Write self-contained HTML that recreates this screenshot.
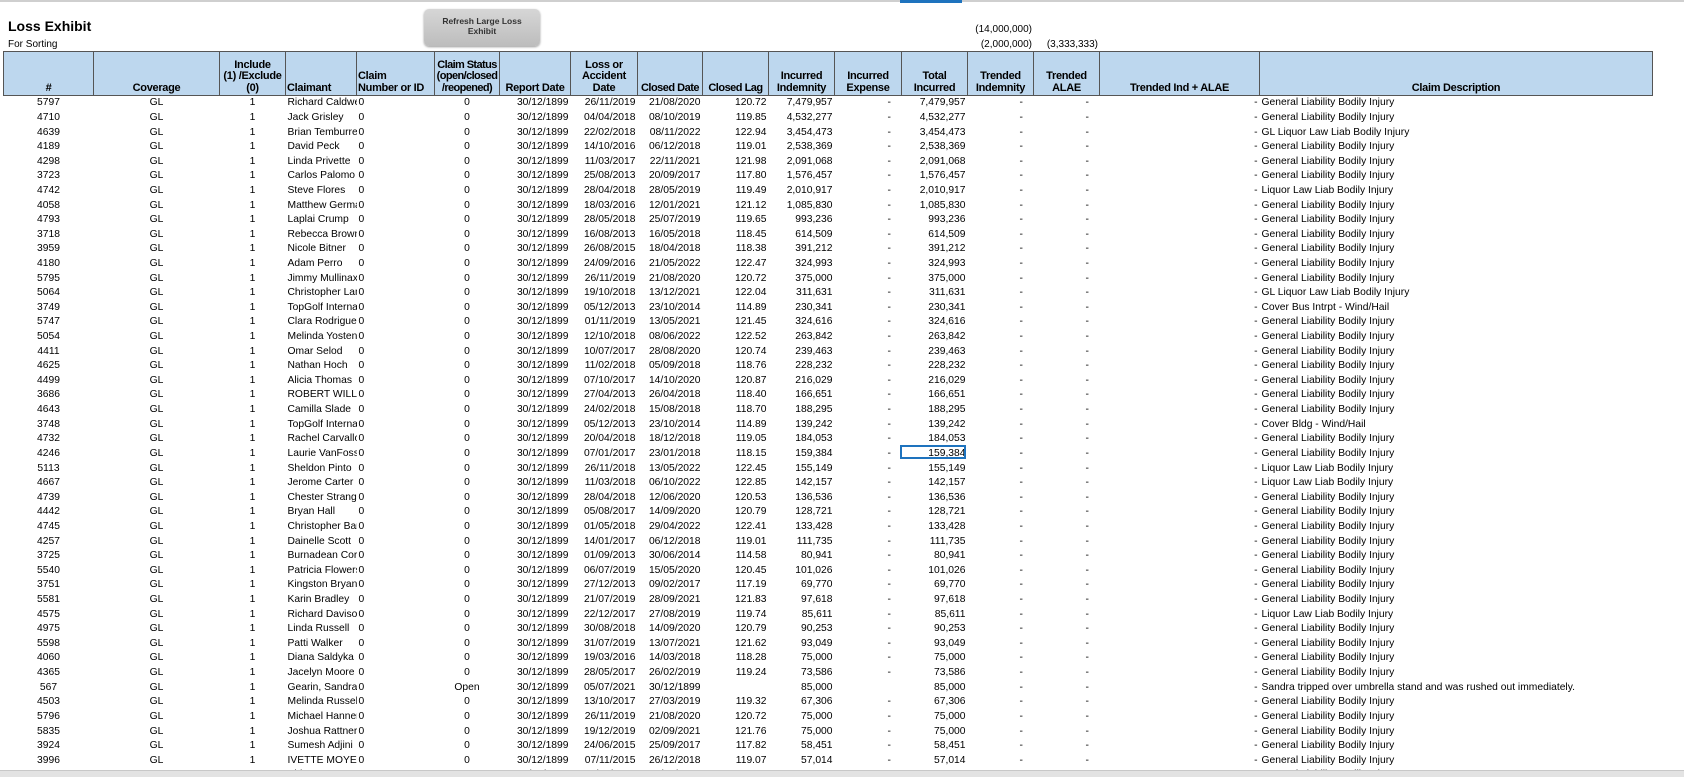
<!DOCTYPE html>
<html><head><meta charset="utf-8">
<style>
html,body{margin:0;padding:0;background:#fff;width:1684px;height:777px;overflow:hidden;position:relative;font-family:"Liberation Sans",Arial,sans-serif;}
.top{position:absolute;left:0;top:0;width:1684px;height:2px;background:#cfcfcf;}
.topsel{position:absolute;left:900px;top:0;width:62px;height:3px;background:#1e73be;}
.title{position:absolute;left:8px;top:18px;font-weight:bold;font-size:14px;color:#000;}
.sub{position:absolute;left:8px;top:39px;font-size:10px;color:#000;}
.btn{position:absolute;left:424px;top:9px;width:116px;height:37px;background:linear-gradient(#d6d6d6,#bdbdbd);border-radius:5px;font-size:8.5px;font-weight:bold;text-align:center;line-height:10px;box-sizing:border-box;padding-top:7px;color:#333;box-shadow:0 1px 2px #999;}
.num{position:absolute;font-size:10px;text-align:right;width:70px;}
table{position:absolute;left:3px;top:51px;border-collapse:collapse;table-layout:fixed;width:1649px;font-size:10.3px;}
th{background:#bdd7ee;border:1px solid #555;font-size:11px;letter-spacing:-0.3px;font-weight:bold;vertical-align:bottom;line-height:11.5px;padding:0;height:43px;text-align:center;overflow:hidden;}
th div{max-height:43px;overflow:hidden;display:flex;flex-direction:column;justify-content:flex-end;padding:0 1px 1px 1px;}
th.l{text-align:left;}
td{height:14.62px;padding:0 2px;white-space:nowrap;overflow:hidden;line-height:14px;}
.c{text-align:center}.r{text-align:right}.l{text-align:left}
.sb{position:absolute;left:0;top:770px;width:1684px;height:7px;background:#e3e3e3;border-top:1px solid #c8c8c8;}
.selbox{position:absolute;left:900px;top:445px;width:66px;height:14px;border:2px solid #1e73be;box-sizing:border-box;}
</style></head><body>
<div class="top"></div><div class="topsel"></div>
<div class="title">Loss Exhibit</div>
<div class="sub">For Sorting</div>
<div class="btn">Refresh Large Loss<br>Exhibit</div>
<div class="num" style="left:962px;top:24px">(14,000,000)</div>
<div class="num" style="left:962px;top:39px">(2,000,000)</div>
<div class="num" style="left:1028px;top:39px">(3,333,333)</div>
<table>
<colgroup><col style="width:90px"><col style="width:126px"><col style="width:66px"><col style="width:71px"><col style="width:78px"><col style="width:65px"><col style="width:71px"><col style="width:67px"><col style="width:65px"><col style="width:66px"><col style="width:66px"><col style="width:67px"><col style="width:66px"><col style="width:66px"><col style="width:66px"><col style="width:160px"><col style="width:393px"></colgroup>
<tr><th><div>#</div></th><th><div>Coverage</div></th><th><div>Include<br>(1) /Exclude<br>(0)</div></th><th class="l"><div>Claimant</div></th><th class="l"><div>Claim<br>Number or ID</div></th><th style="letter-spacing:-0.6px"><div>Claim Status<br>(open/closed<br>/reopened)</div></th><th><div>Report Date</div></th><th><div>Loss or<br>Accident<br>Date</div></th><th style="white-space:nowrap;letter-spacing:-0.5px"><div>Closed Date</div></th><th style="white-space:nowrap;letter-spacing:-0.5px"><div>Closed Lag</div></th><th><div>Incurred<br>Indemnity</div></th><th><div>Incurred<br>Expense</div></th><th><div>Total<br>Incurred</div></th><th><div>Trended<br>Indemnity</div></th><th><div>Trended<br>ALAE</div></th><th><div>Trended Ind + ALAE</div></th><th><div>Claim Description</div></th></tr>
<tr><td class="c">5797</td><td class="c">GL</td><td class="c">1</td><td>Richard Caldwell</td><td>0</td><td class="c">0</td><td class="r">30/12/1899</td><td class="r">26/11/2019</td><td class="r">21/08/2020</td><td class="r">120.72</td><td class="r">7,479,957</td><td class="r">-&nbsp;&nbsp;&nbsp;</td><td class="r">7,479,957</td><td class="r">-&nbsp;&nbsp;&nbsp;</td><td class="r">-&nbsp;&nbsp;&nbsp;</td><td class="r">-</td><td>General Liability Bodily Injury</td></tr>
<tr><td class="c">4710</td><td class="c">GL</td><td class="c">1</td><td>Jack Grisley</td><td>0</td><td class="c">0</td><td class="r">30/12/1899</td><td class="r">04/04/2018</td><td class="r">08/10/2019</td><td class="r">119.85</td><td class="r">4,532,277</td><td class="r">-&nbsp;&nbsp;&nbsp;</td><td class="r">4,532,277</td><td class="r">-&nbsp;&nbsp;&nbsp;</td><td class="r">-&nbsp;&nbsp;&nbsp;</td><td class="r">-</td><td>General Liability Bodily Injury</td></tr>
<tr><td class="c">4639</td><td class="c">GL</td><td class="c">1</td><td>Brian Temburren</td><td>0</td><td class="c">0</td><td class="r">30/12/1899</td><td class="r">22/02/2018</td><td class="r">08/11/2022</td><td class="r">122.94</td><td class="r">3,454,473</td><td class="r">-&nbsp;&nbsp;&nbsp;</td><td class="r">3,454,473</td><td class="r">-&nbsp;&nbsp;&nbsp;</td><td class="r">-&nbsp;&nbsp;&nbsp;</td><td class="r">-</td><td>GL Liquor Law Liab Bodily Injury</td></tr>
<tr><td class="c">4189</td><td class="c">GL</td><td class="c">1</td><td>David Peck</td><td>0</td><td class="c">0</td><td class="r">30/12/1899</td><td class="r">14/10/2016</td><td class="r">06/12/2018</td><td class="r">119.01</td><td class="r">2,538,369</td><td class="r">-&nbsp;&nbsp;&nbsp;</td><td class="r">2,538,369</td><td class="r">-&nbsp;&nbsp;&nbsp;</td><td class="r">-&nbsp;&nbsp;&nbsp;</td><td class="r">-</td><td>General Liability Bodily Injury</td></tr>
<tr><td class="c">4298</td><td class="c">GL</td><td class="c">1</td><td>Linda Privette</td><td>0</td><td class="c">0</td><td class="r">30/12/1899</td><td class="r">11/03/2017</td><td class="r">22/11/2021</td><td class="r">121.98</td><td class="r">2,091,068</td><td class="r">-&nbsp;&nbsp;&nbsp;</td><td class="r">2,091,068</td><td class="r">-&nbsp;&nbsp;&nbsp;</td><td class="r">-&nbsp;&nbsp;&nbsp;</td><td class="r">-</td><td>General Liability Bodily Injury</td></tr>
<tr><td class="c">3723</td><td class="c">GL</td><td class="c">1</td><td>Carlos Palomo</td><td>0</td><td class="c">0</td><td class="r">30/12/1899</td><td class="r">25/08/2013</td><td class="r">20/09/2017</td><td class="r">117.80</td><td class="r">1,576,457</td><td class="r">-&nbsp;&nbsp;&nbsp;</td><td class="r">1,576,457</td><td class="r">-&nbsp;&nbsp;&nbsp;</td><td class="r">-&nbsp;&nbsp;&nbsp;</td><td class="r">-</td><td>General Liability Bodily Injury</td></tr>
<tr><td class="c">4742</td><td class="c">GL</td><td class="c">1</td><td>Steve Flores</td><td>0</td><td class="c">0</td><td class="r">30/12/1899</td><td class="r">28/04/2018</td><td class="r">28/05/2019</td><td class="r">119.49</td><td class="r">2,010,917</td><td class="r">-&nbsp;&nbsp;&nbsp;</td><td class="r">2,010,917</td><td class="r">-&nbsp;&nbsp;&nbsp;</td><td class="r">-&nbsp;&nbsp;&nbsp;</td><td class="r">-</td><td>Liquor Law Liab Bodily Injury</td></tr>
<tr><td class="c">4058</td><td class="c">GL</td><td class="c">1</td><td>Matthew Germain</td><td>0</td><td class="c">0</td><td class="r">30/12/1899</td><td class="r">18/03/2016</td><td class="r">12/01/2021</td><td class="r">121.12</td><td class="r">1,085,830</td><td class="r">-&nbsp;&nbsp;&nbsp;</td><td class="r">1,085,830</td><td class="r">-&nbsp;&nbsp;&nbsp;</td><td class="r">-&nbsp;&nbsp;&nbsp;</td><td class="r">-</td><td>General Liability Bodily Injury</td></tr>
<tr><td class="c">4793</td><td class="c">GL</td><td class="c">1</td><td>Laplai Crump</td><td>0</td><td class="c">0</td><td class="r">30/12/1899</td><td class="r">28/05/2018</td><td class="r">25/07/2019</td><td class="r">119.65</td><td class="r">993,236</td><td class="r">-&nbsp;&nbsp;&nbsp;</td><td class="r">993,236</td><td class="r">-&nbsp;&nbsp;&nbsp;</td><td class="r">-&nbsp;&nbsp;&nbsp;</td><td class="r">-</td><td>General Liability Bodily Injury</td></tr>
<tr><td class="c">3718</td><td class="c">GL</td><td class="c">1</td><td>Rebecca Brown</td><td>0</td><td class="c">0</td><td class="r">30/12/1899</td><td class="r">16/08/2013</td><td class="r">16/05/2018</td><td class="r">118.45</td><td class="r">614,509</td><td class="r">-&nbsp;&nbsp;&nbsp;</td><td class="r">614,509</td><td class="r">-&nbsp;&nbsp;&nbsp;</td><td class="r">-&nbsp;&nbsp;&nbsp;</td><td class="r">-</td><td>General Liability Bodily Injury</td></tr>
<tr><td class="c">3959</td><td class="c">GL</td><td class="c">1</td><td>Nicole Bitner</td><td>0</td><td class="c">0</td><td class="r">30/12/1899</td><td class="r">26/08/2015</td><td class="r">18/04/2018</td><td class="r">118.38</td><td class="r">391,212</td><td class="r">-&nbsp;&nbsp;&nbsp;</td><td class="r">391,212</td><td class="r">-&nbsp;&nbsp;&nbsp;</td><td class="r">-&nbsp;&nbsp;&nbsp;</td><td class="r">-</td><td>General Liability Bodily Injury</td></tr>
<tr><td class="c">4180</td><td class="c">GL</td><td class="c">1</td><td>Adam Perro</td><td>0</td><td class="c">0</td><td class="r">30/12/1899</td><td class="r">24/09/2016</td><td class="r">21/05/2022</td><td class="r">122.47</td><td class="r">324,993</td><td class="r">-&nbsp;&nbsp;&nbsp;</td><td class="r">324,993</td><td class="r">-&nbsp;&nbsp;&nbsp;</td><td class="r">-&nbsp;&nbsp;&nbsp;</td><td class="r">-</td><td>General Liability Bodily Injury</td></tr>
<tr><td class="c">5795</td><td class="c">GL</td><td class="c">1</td><td>Jimmy Mullinax</td><td>0</td><td class="c">0</td><td class="r">30/12/1899</td><td class="r">26/11/2019</td><td class="r">21/08/2020</td><td class="r">120.72</td><td class="r">375,000</td><td class="r">-&nbsp;&nbsp;&nbsp;</td><td class="r">375,000</td><td class="r">-&nbsp;&nbsp;&nbsp;</td><td class="r">-&nbsp;&nbsp;&nbsp;</td><td class="r">-</td><td>General Liability Bodily Injury</td></tr>
<tr><td class="c">5064</td><td class="c">GL</td><td class="c">1</td><td>Christopher Lane</td><td>0</td><td class="c">0</td><td class="r">30/12/1899</td><td class="r">19/10/2018</td><td class="r">13/12/2021</td><td class="r">122.04</td><td class="r">311,631</td><td class="r">-&nbsp;&nbsp;&nbsp;</td><td class="r">311,631</td><td class="r">-&nbsp;&nbsp;&nbsp;</td><td class="r">-&nbsp;&nbsp;&nbsp;</td><td class="r">-</td><td>GL Liquor Law Liab Bodily Injury</td></tr>
<tr><td class="c">3749</td><td class="c">GL</td><td class="c">1</td><td>TopGolf International</td><td>0</td><td class="c">0</td><td class="r">30/12/1899</td><td class="r">05/12/2013</td><td class="r">23/10/2014</td><td class="r">114.89</td><td class="r">230,341</td><td class="r">-&nbsp;&nbsp;&nbsp;</td><td class="r">230,341</td><td class="r">-&nbsp;&nbsp;&nbsp;</td><td class="r">-&nbsp;&nbsp;&nbsp;</td><td class="r">-</td><td>Cover Bus Intrpt - Wind/Hail</td></tr>
<tr><td class="c">5747</td><td class="c">GL</td><td class="c">1</td><td>Clara Rodriguez</td><td>0</td><td class="c">0</td><td class="r">30/12/1899</td><td class="r">01/11/2019</td><td class="r">13/05/2021</td><td class="r">121.45</td><td class="r">324,616</td><td class="r">-&nbsp;&nbsp;&nbsp;</td><td class="r">324,616</td><td class="r">-&nbsp;&nbsp;&nbsp;</td><td class="r">-&nbsp;&nbsp;&nbsp;</td><td class="r">-</td><td>General Liability Bodily Injury</td></tr>
<tr><td class="c">5054</td><td class="c">GL</td><td class="c">1</td><td>Melinda Yosten</td><td>0</td><td class="c">0</td><td class="r">30/12/1899</td><td class="r">12/10/2018</td><td class="r">08/06/2022</td><td class="r">122.52</td><td class="r">263,842</td><td class="r">-&nbsp;&nbsp;&nbsp;</td><td class="r">263,842</td><td class="r">-&nbsp;&nbsp;&nbsp;</td><td class="r">-&nbsp;&nbsp;&nbsp;</td><td class="r">-</td><td>General Liability Bodily Injury</td></tr>
<tr><td class="c">4411</td><td class="c">GL</td><td class="c">1</td><td>Omar Selod</td><td>0</td><td class="c">0</td><td class="r">30/12/1899</td><td class="r">10/07/2017</td><td class="r">28/08/2020</td><td class="r">120.74</td><td class="r">239,463</td><td class="r">-&nbsp;&nbsp;&nbsp;</td><td class="r">239,463</td><td class="r">-&nbsp;&nbsp;&nbsp;</td><td class="r">-&nbsp;&nbsp;&nbsp;</td><td class="r">-</td><td>General Liability Bodily Injury</td></tr>
<tr><td class="c">4625</td><td class="c">GL</td><td class="c">1</td><td>Nathan Hoch</td><td>0</td><td class="c">0</td><td class="r">30/12/1899</td><td class="r">11/02/2018</td><td class="r">05/09/2018</td><td class="r">118.76</td><td class="r">228,232</td><td class="r">-&nbsp;&nbsp;&nbsp;</td><td class="r">228,232</td><td class="r">-&nbsp;&nbsp;&nbsp;</td><td class="r">-&nbsp;&nbsp;&nbsp;</td><td class="r">-</td><td>General Liability Bodily Injury</td></tr>
<tr><td class="c">4499</td><td class="c">GL</td><td class="c">1</td><td>Alicia Thomas</td><td>0</td><td class="c">0</td><td class="r">30/12/1899</td><td class="r">07/10/2017</td><td class="r">14/10/2020</td><td class="r">120.87</td><td class="r">216,029</td><td class="r">-&nbsp;&nbsp;&nbsp;</td><td class="r">216,029</td><td class="r">-&nbsp;&nbsp;&nbsp;</td><td class="r">-&nbsp;&nbsp;&nbsp;</td><td class="r">-</td><td>General Liability Bodily Injury</td></tr>
<tr><td class="c">3686</td><td class="c">GL</td><td class="c">1</td><td>ROBERT WILLETT</td><td>0</td><td class="c">0</td><td class="r">30/12/1899</td><td class="r">27/04/2013</td><td class="r">26/04/2018</td><td class="r">118.40</td><td class="r">166,651</td><td class="r">-&nbsp;&nbsp;&nbsp;</td><td class="r">166,651</td><td class="r">-&nbsp;&nbsp;&nbsp;</td><td class="r">-&nbsp;&nbsp;&nbsp;</td><td class="r">-</td><td>General Liability Bodily Injury</td></tr>
<tr><td class="c">4643</td><td class="c">GL</td><td class="c">1</td><td>Camilla Slade</td><td>0</td><td class="c">0</td><td class="r">30/12/1899</td><td class="r">24/02/2018</td><td class="r">15/08/2018</td><td class="r">118.70</td><td class="r">188,295</td><td class="r">-&nbsp;&nbsp;&nbsp;</td><td class="r">188,295</td><td class="r">-&nbsp;&nbsp;&nbsp;</td><td class="r">-&nbsp;&nbsp;&nbsp;</td><td class="r">-</td><td>General Liability Bodily Injury</td></tr>
<tr><td class="c">3748</td><td class="c">GL</td><td class="c">1</td><td>TopGolf International</td><td>0</td><td class="c">0</td><td class="r">30/12/1899</td><td class="r">05/12/2013</td><td class="r">23/10/2014</td><td class="r">114.89</td><td class="r">139,242</td><td class="r">-&nbsp;&nbsp;&nbsp;</td><td class="r">139,242</td><td class="r">-&nbsp;&nbsp;&nbsp;</td><td class="r">-&nbsp;&nbsp;&nbsp;</td><td class="r">-</td><td>Cover Bldg - Wind/Hail</td></tr>
<tr><td class="c">4732</td><td class="c">GL</td><td class="c">1</td><td>Rachel Carvallo</td><td>0</td><td class="c">0</td><td class="r">30/12/1899</td><td class="r">20/04/2018</td><td class="r">18/12/2018</td><td class="r">119.05</td><td class="r">184,053</td><td class="r">-&nbsp;&nbsp;&nbsp;</td><td class="r">184,053</td><td class="r">-&nbsp;&nbsp;&nbsp;</td><td class="r">-&nbsp;&nbsp;&nbsp;</td><td class="r">-</td><td>General Liability Bodily Injury</td></tr>
<tr><td class="c">4246</td><td class="c">GL</td><td class="c">1</td><td>Laurie VanFossen</td><td>0</td><td class="c">0</td><td class="r">30/12/1899</td><td class="r">07/01/2017</td><td class="r">23/01/2018</td><td class="r">118.15</td><td class="r">159,384</td><td class="r">-&nbsp;&nbsp;&nbsp;</td><td class="r">159,384</td><td class="r">-&nbsp;&nbsp;&nbsp;</td><td class="r">-&nbsp;&nbsp;&nbsp;</td><td class="r">-</td><td>General Liability Bodily Injury</td></tr>
<tr><td class="c">5113</td><td class="c">GL</td><td class="c">1</td><td>Sheldon Pinto</td><td>0</td><td class="c">0</td><td class="r">30/12/1899</td><td class="r">26/11/2018</td><td class="r">13/05/2022</td><td class="r">122.45</td><td class="r">155,149</td><td class="r">-&nbsp;&nbsp;&nbsp;</td><td class="r">155,149</td><td class="r">-&nbsp;&nbsp;&nbsp;</td><td class="r">-&nbsp;&nbsp;&nbsp;</td><td class="r">-</td><td>Liquor Law Liab Bodily Injury</td></tr>
<tr><td class="c">4667</td><td class="c">GL</td><td class="c">1</td><td>Jerome Carter</td><td>0</td><td class="c">0</td><td class="r">30/12/1899</td><td class="r">11/03/2018</td><td class="r">06/10/2022</td><td class="r">122.85</td><td class="r">142,157</td><td class="r">-&nbsp;&nbsp;&nbsp;</td><td class="r">142,157</td><td class="r">-&nbsp;&nbsp;&nbsp;</td><td class="r">-&nbsp;&nbsp;&nbsp;</td><td class="r">-</td><td>Liquor Law Liab Bodily Injury</td></tr>
<tr><td class="c">4739</td><td class="c">GL</td><td class="c">1</td><td>Chester Strange</td><td>0</td><td class="c">0</td><td class="r">30/12/1899</td><td class="r">28/04/2018</td><td class="r">12/06/2020</td><td class="r">120.53</td><td class="r">136,536</td><td class="r">-&nbsp;&nbsp;&nbsp;</td><td class="r">136,536</td><td class="r">-&nbsp;&nbsp;&nbsp;</td><td class="r">-&nbsp;&nbsp;&nbsp;</td><td class="r">-</td><td>General Liability Bodily Injury</td></tr>
<tr><td class="c">4442</td><td class="c">GL</td><td class="c">1</td><td>Bryan Hall</td><td>0</td><td class="c">0</td><td class="r">30/12/1899</td><td class="r">05/08/2017</td><td class="r">14/09/2020</td><td class="r">120.79</td><td class="r">128,721</td><td class="r">-&nbsp;&nbsp;&nbsp;</td><td class="r">128,721</td><td class="r">-&nbsp;&nbsp;&nbsp;</td><td class="r">-&nbsp;&nbsp;&nbsp;</td><td class="r">-</td><td>General Liability Bodily Injury</td></tr>
<tr><td class="c">4745</td><td class="c">GL</td><td class="c">1</td><td>Christopher Barnes</td><td>0</td><td class="c">0</td><td class="r">30/12/1899</td><td class="r">01/05/2018</td><td class="r">29/04/2022</td><td class="r">122.41</td><td class="r">133,428</td><td class="r">-&nbsp;&nbsp;&nbsp;</td><td class="r">133,428</td><td class="r">-&nbsp;&nbsp;&nbsp;</td><td class="r">-&nbsp;&nbsp;&nbsp;</td><td class="r">-</td><td>General Liability Bodily Injury</td></tr>
<tr><td class="c">4257</td><td class="c">GL</td><td class="c">1</td><td>Dainelle Scott</td><td>0</td><td class="c">0</td><td class="r">30/12/1899</td><td class="r">14/01/2017</td><td class="r">06/12/2018</td><td class="r">119.01</td><td class="r">111,735</td><td class="r">-&nbsp;&nbsp;&nbsp;</td><td class="r">111,735</td><td class="r">-&nbsp;&nbsp;&nbsp;</td><td class="r">-&nbsp;&nbsp;&nbsp;</td><td class="r">-</td><td>General Liability Bodily Injury</td></tr>
<tr><td class="c">3725</td><td class="c">GL</td><td class="c">1</td><td>Burnadean Cornell</td><td>0</td><td class="c">0</td><td class="r">30/12/1899</td><td class="r">01/09/2013</td><td class="r">30/06/2014</td><td class="r">114.58</td><td class="r">80,941</td><td class="r">-&nbsp;&nbsp;&nbsp;</td><td class="r">80,941</td><td class="r">-&nbsp;&nbsp;&nbsp;</td><td class="r">-&nbsp;&nbsp;&nbsp;</td><td class="r">-</td><td>General Liability Bodily Injury</td></tr>
<tr><td class="c">5540</td><td class="c">GL</td><td class="c">1</td><td>Patricia Flowers</td><td>0</td><td class="c">0</td><td class="r">30/12/1899</td><td class="r">06/07/2019</td><td class="r">15/05/2020</td><td class="r">120.45</td><td class="r">101,026</td><td class="r">-&nbsp;&nbsp;&nbsp;</td><td class="r">101,026</td><td class="r">-&nbsp;&nbsp;&nbsp;</td><td class="r">-&nbsp;&nbsp;&nbsp;</td><td class="r">-</td><td>General Liability Bodily Injury</td></tr>
<tr><td class="c">3751</td><td class="c">GL</td><td class="c">1</td><td>Kingston Bryan</td><td>0</td><td class="c">0</td><td class="r">30/12/1899</td><td class="r">27/12/2013</td><td class="r">09/02/2017</td><td class="r">117.19</td><td class="r">69,770</td><td class="r">-&nbsp;&nbsp;&nbsp;</td><td class="r">69,770</td><td class="r">-&nbsp;&nbsp;&nbsp;</td><td class="r">-&nbsp;&nbsp;&nbsp;</td><td class="r">-</td><td>General Liability Bodily Injury</td></tr>
<tr><td class="c">5581</td><td class="c">GL</td><td class="c">1</td><td>Karin Bradley</td><td>0</td><td class="c">0</td><td class="r">30/12/1899</td><td class="r">21/07/2019</td><td class="r">28/09/2021</td><td class="r">121.83</td><td class="r">97,618</td><td class="r">-&nbsp;&nbsp;&nbsp;</td><td class="r">97,618</td><td class="r">-&nbsp;&nbsp;&nbsp;</td><td class="r">-&nbsp;&nbsp;&nbsp;</td><td class="r">-</td><td>General Liability Bodily Injury</td></tr>
<tr><td class="c">4575</td><td class="c">GL</td><td class="c">1</td><td>Richard Davison</td><td>0</td><td class="c">0</td><td class="r">30/12/1899</td><td class="r">22/12/2017</td><td class="r">27/08/2019</td><td class="r">119.74</td><td class="r">85,611</td><td class="r">-&nbsp;&nbsp;&nbsp;</td><td class="r">85,611</td><td class="r">-&nbsp;&nbsp;&nbsp;</td><td class="r">-&nbsp;&nbsp;&nbsp;</td><td class="r">-</td><td>Liquor Law Liab Bodily Injury</td></tr>
<tr><td class="c">4975</td><td class="c">GL</td><td class="c">1</td><td>Linda Russell</td><td>0</td><td class="c">0</td><td class="r">30/12/1899</td><td class="r">30/08/2018</td><td class="r">14/09/2020</td><td class="r">120.79</td><td class="r">90,253</td><td class="r">-&nbsp;&nbsp;&nbsp;</td><td class="r">90,253</td><td class="r">-&nbsp;&nbsp;&nbsp;</td><td class="r">-&nbsp;&nbsp;&nbsp;</td><td class="r">-</td><td>General Liability Bodily Injury</td></tr>
<tr><td class="c">5598</td><td class="c">GL</td><td class="c">1</td><td>Patti Walker</td><td>0</td><td class="c">0</td><td class="r">30/12/1899</td><td class="r">31/07/2019</td><td class="r">13/07/2021</td><td class="r">121.62</td><td class="r">93,049</td><td class="r">-&nbsp;&nbsp;&nbsp;</td><td class="r">93,049</td><td class="r">-&nbsp;&nbsp;&nbsp;</td><td class="r">-&nbsp;&nbsp;&nbsp;</td><td class="r">-</td><td>General Liability Bodily Injury</td></tr>
<tr><td class="c">4060</td><td class="c">GL</td><td class="c">1</td><td>Diana Saldyka</td><td>0</td><td class="c">0</td><td class="r">30/12/1899</td><td class="r">19/03/2016</td><td class="r">14/03/2018</td><td class="r">118.28</td><td class="r">75,000</td><td class="r">-&nbsp;&nbsp;&nbsp;</td><td class="r">75,000</td><td class="r">-&nbsp;&nbsp;&nbsp;</td><td class="r">-&nbsp;&nbsp;&nbsp;</td><td class="r">-</td><td>General Liability Bodily Injury</td></tr>
<tr><td class="c">4365</td><td class="c">GL</td><td class="c">1</td><td>Jacelyn Moore</td><td>0</td><td class="c">0</td><td class="r">30/12/1899</td><td class="r">28/05/2017</td><td class="r">26/02/2019</td><td class="r">119.24</td><td class="r">73,586</td><td class="r">-&nbsp;&nbsp;&nbsp;</td><td class="r">73,586</td><td class="r">-&nbsp;&nbsp;&nbsp;</td><td class="r">-&nbsp;&nbsp;&nbsp;</td><td class="r">-</td><td>General Liability Bodily Injury</td></tr>
<tr><td class="c">567</td><td class="c">GL</td><td class="c">1</td><td>Gearin, Sandra</td><td>0</td><td class="c">Open</td><td class="r">30/12/1899</td><td class="r">05/07/2021</td><td class="r">30/12/1899</td><td class="r"></td><td class="r">85,000</td><td class="r"></td><td class="r">85,000</td><td class="r">-&nbsp;&nbsp;&nbsp;</td><td class="r">-&nbsp;&nbsp;&nbsp;</td><td class="r">-</td><td>Sandra tripped over umbrella stand and was rushed out immediately.</td></tr>
<tr><td class="c">4503</td><td class="c">GL</td><td class="c">1</td><td>Melinda Russell</td><td>0</td><td class="c">0</td><td class="r">30/12/1899</td><td class="r">13/10/2017</td><td class="r">27/03/2019</td><td class="r">119.32</td><td class="r">67,306</td><td class="r">-&nbsp;&nbsp;&nbsp;</td><td class="r">67,306</td><td class="r">-&nbsp;&nbsp;&nbsp;</td><td class="r">-&nbsp;&nbsp;&nbsp;</td><td class="r">-</td><td>General Liability Bodily Injury</td></tr>
<tr><td class="c">5796</td><td class="c">GL</td><td class="c">1</td><td>Michael Hanner</td><td>0</td><td class="c">0</td><td class="r">30/12/1899</td><td class="r">26/11/2019</td><td class="r">21/08/2020</td><td class="r">120.72</td><td class="r">75,000</td><td class="r">-&nbsp;&nbsp;&nbsp;</td><td class="r">75,000</td><td class="r">-&nbsp;&nbsp;&nbsp;</td><td class="r">-&nbsp;&nbsp;&nbsp;</td><td class="r">-</td><td>General Liability Bodily Injury</td></tr>
<tr><td class="c">5835</td><td class="c">GL</td><td class="c">1</td><td>Joshua Rattner</td><td>0</td><td class="c">0</td><td class="r">30/12/1899</td><td class="r">19/12/2019</td><td class="r">02/09/2021</td><td class="r">121.76</td><td class="r">75,000</td><td class="r">-&nbsp;&nbsp;&nbsp;</td><td class="r">75,000</td><td class="r">-&nbsp;&nbsp;&nbsp;</td><td class="r">-&nbsp;&nbsp;&nbsp;</td><td class="r">-</td><td>General Liability Bodily Injury</td></tr>
<tr><td class="c">3924</td><td class="c">GL</td><td class="c">1</td><td>Sumesh Adjini</td><td>0</td><td class="c">0</td><td class="r">30/12/1899</td><td class="r">24/06/2015</td><td class="r">25/09/2017</td><td class="r">117.82</td><td class="r">58,451</td><td class="r">-&nbsp;&nbsp;&nbsp;</td><td class="r">58,451</td><td class="r">-&nbsp;&nbsp;&nbsp;</td><td class="r">-&nbsp;&nbsp;&nbsp;</td><td class="r">-</td><td>General Liability Bodily Injury</td></tr>
<tr><td class="c">3996</td><td class="c">GL</td><td class="c">1</td><td>IVETTE MOYER</td><td>0</td><td class="c">0</td><td class="r">30/12/1899</td><td class="r">07/11/2015</td><td class="r">26/12/2018</td><td class="r">119.07</td><td class="r">57,014</td><td class="r">-&nbsp;&nbsp;&nbsp;</td><td class="r">57,014</td><td class="r">-&nbsp;&nbsp;&nbsp;</td><td class="r">-&nbsp;&nbsp;&nbsp;</td><td class="r">-</td><td>General Liability Bodily Injury</td></tr>
<tr><td class="c">4120</td><td class="c">GL</td><td class="c">1</td><td>Aldo Perez</td><td>0</td><td class="c">0</td><td class="r">30/12/1899</td><td class="r">18/07/2016</td><td class="r">22/04/2019</td><td class="r">119.30</td><td class="r">57,205</td><td class="r">-&nbsp;&nbsp;&nbsp;</td><td class="r">57,205</td><td class="r">-&nbsp;&nbsp;&nbsp;</td><td class="r">-&nbsp;&nbsp;&nbsp;</td><td class="r">-</td><td>General Liability Bodily Injury</td></tr>
</table>
<div class="selbox"></div>
<div class="sb"></div>
</body></html>
